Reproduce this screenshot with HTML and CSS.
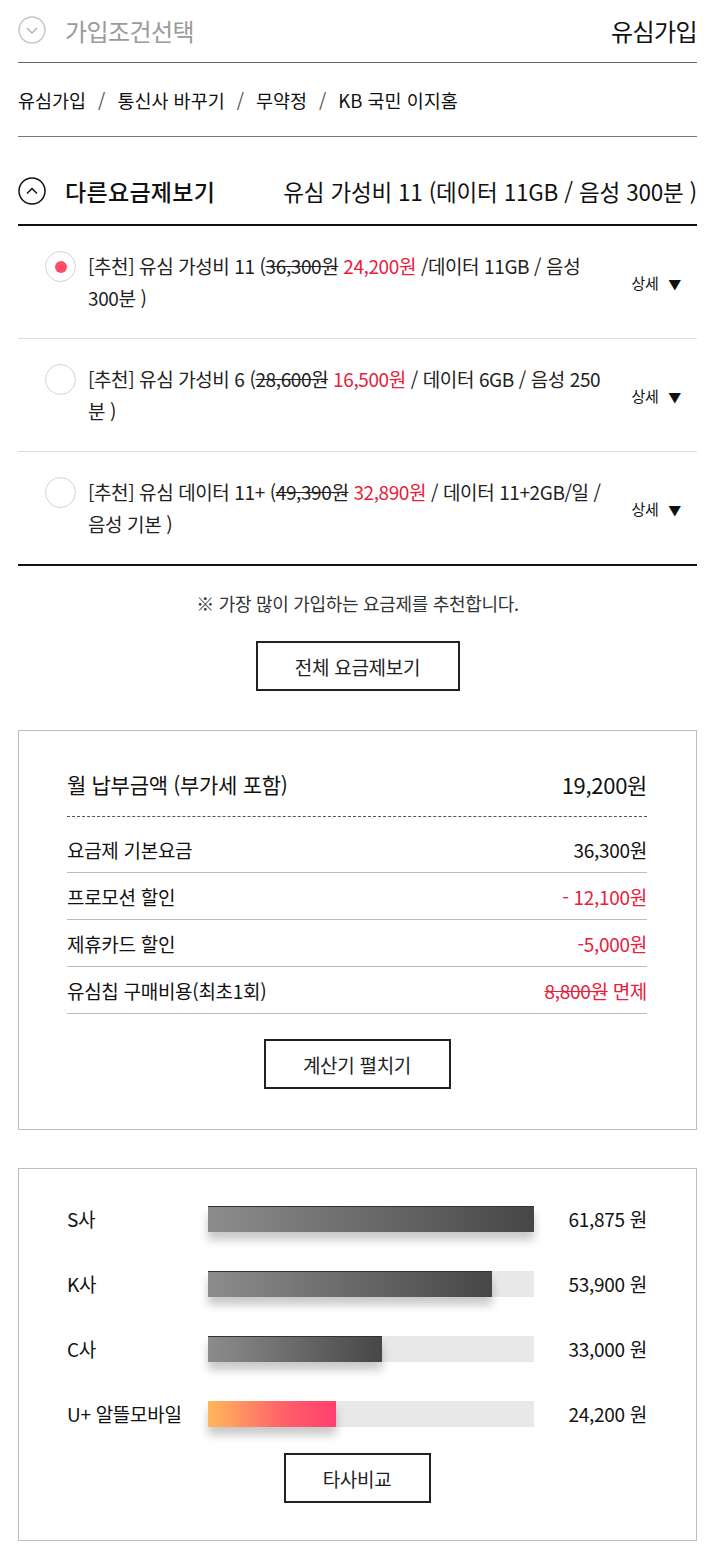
FILE: index.html
```html
<!DOCTYPE html>
<html lang="ko">
<head>
<meta charset="utf-8">
<title>유심가입</title>
<link rel="stylesheet" href="styles.css">
</head>
<body>
<div class="page">
  <header class="top">
    <div class="top-left">
      <svg class="ico" viewBox="0 0 28 28" width="28" height="28"><circle cx="14" cy="14" r="13" fill="none" stroke="#c4c4c4" stroke-width="1.4"/><path d="M9 12 L14 17 L19 12" fill="none" stroke="#b0b0b0" stroke-width="1.4"/></svg>
      <span class="top-title">가입조건선택</span>
    </div>
    <span class="top-right">유심가입</span>
  </header>

  <nav class="crumbs">
    <span>유심가입</span><span class="sep">/</span><span>통신사 바꾸기</span><span class="sep">/</span><span>무약정</span><span class="sep">/</span><span>KB 국민 이지홈</span>
  </nav>

  <section class="plans">
    <div class="plans-head">
      <div class="plans-head-left">
        <svg class="ico" viewBox="0 0 28 28" width="28" height="28"><circle cx="14" cy="14" r="13" fill="none" stroke="#111" stroke-width="1.5"/><path d="M9 16.5 L14 11.5 L19 16.5" fill="none" stroke="#111" stroke-width="1.5"/></svg>
        <span class="plans-title">다른요금제보기</span>
      </div>
      <span class="plans-current">유심 가성비 11 (데이터 11GB / 음성 300분 )</span>
    </div>

    <ul class="plan-list">
      <li class="plan">
        <span class="radio on"></span>
        <p class="plan-text">[추천] 유심 가성비 11 (<s>36,300원</s> <em>24,200원</em> /데이터 11GB / 음성<br>300분 )</p>
        <span class="detail">상세 <i>▼</i></span>
      </li>
      <li class="plan">
        <span class="radio"></span>
        <p class="plan-text">[추천] 유심 가성비 6 (<s>28,600원</s> <em>16,500원</em> / 데이터 6GB / 음성 250<br>분 )</p>
        <span class="detail">상세 <i>▼</i></span>
      </li>
      <li class="plan">
        <span class="radio"></span>
        <p class="plan-text">[추천] 유심 데이터 11+ (<s>49,390원</s> <em>32,890원</em> / 데이터 11+2GB/일 /<br>음성 기본 )</p>
        <span class="detail">상세 <i>▼</i></span>
      </li>
    </ul>
  </section>

  <p class="note">※ 가장 많이 가입하는 요금제를 추천합니다.</p>
  <div class="btn-wrap"><button class="btn btn-all">전체 요금제보기</button></div>

  <section class="box fee">
    <div class="fee-total"><span>월 납부금액 (부가세 포함)</span><span class="fee-total-val">19,200원</span></div>
    <ul class="fee-rows">
      <li><span>요금제 기본요금</span><span>36,300원</span></li>
      <li><span>프로모션 할인</span><span class="red">- 12,100원</span></li>
      <li><span>제휴카드 할인</span><span class="red">-5,000원</span></li>
      <li><span>유심칩 구매비용(최초1회)</span><span class="red"><s>8,800원</s> 면제</span></li>
    </ul>
    <div class="btn-wrap"><button class="btn btn-calc">계산기 펼치기</button></div>
  </section>

  <section class="box compare">
    <ul class="bars">
      <li><span class="bar-label">S사</span><span class="track"><span class="fill" style="width:100%"></span></span><span class="bar-val">61,875 원</span></li>
      <li><span class="bar-label">K사</span><span class="track"><span class="fill" style="width:87.1%"></span></span><span class="bar-val">53,900 원</span></li>
      <li><span class="bar-label">C사</span><span class="track"><span class="fill" style="width:53.4%"></span></span><span class="bar-val">33,000 원</span></li>
      <li><span class="bar-label">U+ 알뜰모바일</span><span class="track"><span class="fill ours" style="width:39.3%"></span></span><span class="bar-val">24,200 원</span></li>
    </ul>
    <div class="btn-wrap"><button class="btn btn-cmp">타사비교</button></div>
  </section>
</div>
</body>
</html>
```
FILE: styles.css
```css
* { box-sizing: border-box; }
html, body { margin: 0; padding: 0; background: #fff; }
body {
  font-family: "Noto Sans CJK KR", "Noto Sans", sans-serif;
  color: #111;
  letter-spacing: -0.3px;
}
ul { list-style: none; margin: 0; padding: 0; }
p { margin: 0; }
s { text-decoration: line-through; }
em { font-style: normal; color: #e8203c; }
.red { color: #e8203c; }

.page { padding: 0 23px 8px 18px; }

.ico { display: block; flex: none; }

.top {
  height: 63px;
  display: flex;
  align-items: center;
  justify-content: space-between;
  border-bottom: 1px solid #666;
  padding-bottom: 2px;
}
.top-left { display: flex; align-items: center; gap: 19px; }
.top-title { font-size: 24px; color: #9a9a9a; letter-spacing: -0.6px; }
.top-right { font-size: 24px; color: #111; letter-spacing: -0.6px; }

.crumbs {
  height: 74px;
  display: flex;
  align-items: center;
  font-size: 18.5px;
  letter-spacing: 0;
  border-bottom: 1px solid #777;
  color: #111;
}
.crumbs .sep { margin: 0 12px; color: #555; }

.plans-head {
  height: 89px;
  display: flex;
  align-items: center;
  justify-content: space-between;
  border-bottom: 2px solid #111;
  padding-top: 20px;
}
.plans-head-left { display: flex; align-items: center; gap: 19px; }
.plans-title { font-size: 23px; font-weight: 500; letter-spacing: 0.3px; }
.plans-current { font-size: 22.5px; letter-spacing: -0.2px; }

.plan {
  display: flex;
  align-items: center;
  padding: 24px 16px 24px 27px;
  border-bottom: 1px solid #ddd;
}
.plan:last-child { border-bottom: 2px solid #111; }
.radio {
  align-self: flex-start;
  flex: none;
  width: 31px;
  height: 31px;
  border-radius: 50%;
  border: 1.5px solid #d2d2d2;
  margin-top: 1px;
  display: flex;
  align-items: center;
  justify-content: center;
}
.radio.on::after {
  content: "";
  width: 12px;
  height: 12px;
  border-radius: 50%;
  background: #ff4d68;
}
.plan-text {
  flex: 1;
  margin-left: 12px;
  font-size: 19px;
  line-height: 32px;
  color: #222;
  letter-spacing: -0.4px;
  white-space: nowrap;
}
.detail { font-size: 15px; flex: none; white-space: nowrap; }
.detail i { font-style: normal; font-size: 13px; margin-left: 6px; }

.note {
  text-align: center;
  font-size: 18px;
  color: #333;
  padding-top: 23px;
  line-height: 28px;
}
.btn-wrap { display: flex; justify-content: center; }
.btn {
  font-family: inherit;
  letter-spacing: -0.3px;
  background: #fff;
  border: 2px solid #222;
  height: 50px;
  font-size: 19px;
  color: #222;
  cursor: pointer;
}
.btn-all { width: 204px; margin-top: 24px; }

.box {
  border: 1px solid #bdbdbd;
  padding: 0 49px 0 48px;
}
.fee { margin-top: 39px; padding-bottom: 40px; }
.fee-total {
  display: flex;
  justify-content: space-between;
  align-items: center;
  font-size: 21px;
  padding-top: 30px;
  height: 86px;
  border-bottom: 1px dashed #555;
  padding-bottom: 10px;
}
.fee-total-val { font-size: 22px; }
.fee-rows { padding-top: 9px; }
.fee-rows li {
  display: flex;
  justify-content: space-between;
  align-items: center;
  height: 47px;
  border-bottom: 1px solid #bbb;
  font-size: 19px;
}
.btn-calc { width: 187px; margin-top: 25px; }

.compare { margin-top: 38px; padding-top: 37px; padding-bottom: 37px; }
.bars li {
  display: flex;
  align-items: center;
  height: 26px;
  line-height: 26px;
  margin-bottom: 39px;
  font-size: 19px;
}
.bars li:last-child { margin-bottom: 26px; }
.bar-label { width: 141px; flex: none; white-space: nowrap; }
.track {
  width: 326px;
  flex: none;
  height: 26px;
  background: #e8e8e8;
  display: flex;
}
.fill {
  height: 100%;
  background: linear-gradient(to right, #8c8c8c, #474747);
  border-top: 1px solid #333;
  box-shadow: 0 8px 10px rgba(0,0,0,0.22);
}
.fill.ours {
  background: linear-gradient(to right, #ffb85c, #ff5f6a 60%, #ff3f6e);
  border-top: none;
}
.bar-val { flex: 1; text-align: right; white-space: nowrap; }
.btn-cmp { width: 147px; }
```
